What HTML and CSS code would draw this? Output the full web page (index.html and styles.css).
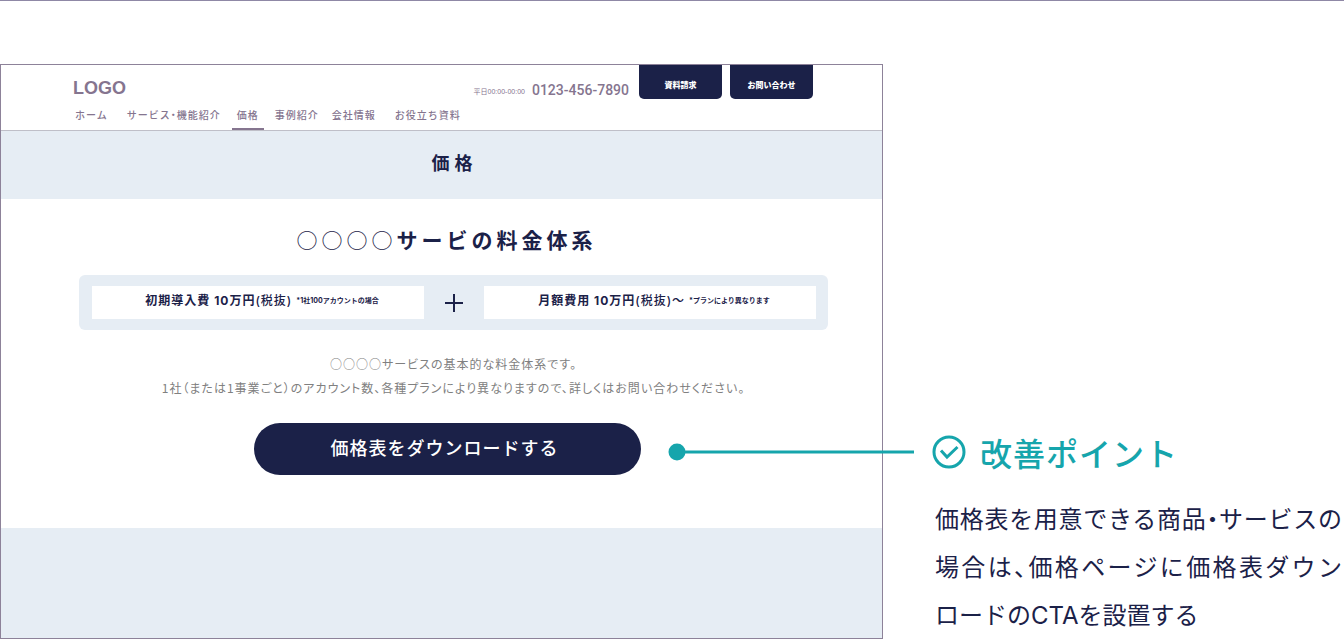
FILE: index.html
```html
<!DOCTYPE html>
<html lang="ja">
<head>
<meta charset="utf-8">
<meta name="viewport" content="width=device-width, initial-scale=1">
<title>価格</title>
<link rel="stylesheet" href="styles.css">
</head>
<body>
<div class="page">
  <section class="mock">
    <header class="header">
      <div class="header-top">
        <a class="logo" href="#">LOGO</a>
        <div class="contact">
          <span class="hours">平日00:00-00:00</span>
          <span class="tel">0123-456-7890</span>
          <button class="tab" type="button">資料請求</button>
          <button class="tab" type="button">お問い合わせ</button>
        </div>
      </div>
      <nav class="nav">
        <a class="nav-link wide" href="#">ホーム</a>
        <a class="nav-link" href="#">サービス・機能紹介</a>
        <a class="nav-link active" href="#">価格</a>
        <a class="nav-link" href="#">事例紹介</a>
        <a class="nav-link wide" href="#">会社情報</a>
        <a class="nav-link" href="#">お役立ち資料</a>
      </nav>
    </header>
    <div class="hero"><h1 class="hero-title">価格</h1></div>
    <div class="main">
      <h2 class="heading"><span class="circles">○○○○</span>サービの料金体系</h2>
      <div class="plans">
        <div class="plan"><span>初期導入費 10万円<span class="light">(税抜)</span></span><small class="note">*1社100アカウントの場合</small></div>
        <svg class="plus" viewBox="0 0 20 20" aria-hidden="true"><path d="M10 1v18M1 10h18"/></svg>
        <div class="plan"><span>月額費用 10万円<span class="light">(税抜)〜</span></span><small class="note">*プランにより異なります</small></div>
      </div>
      <p class="desc">○○○○サービスの基本的な料金体系です。<br>1社（または1事業ごと）のアカウント数、各種プランにより異なりますので、詳しくはお問い合わせください。</p>
      <button class="cta" type="button">価格表をダウンロードする</button>
    </div>
    <div class="footer-band"></div>
  </section>
  <aside class="callout">
    <h2 class="callout-title">
      <svg class="connector" viewBox="0 0 246 18" aria-hidden="true"><circle cx="9" cy="9" r="8.5"/><path d="M9 9h237"/></svg>
      <svg class="check" viewBox="0 0 34 34" aria-hidden="true"><circle cx="17" cy="17" r="15"/><path d="M9 15.500l6 6.500L25.500 12"/></svg>
      改善ポイント
    </h2>
    <p class="callout-text">
      <span class="line full">価格表を用意できる商品・サービスの</span>
      <span class="line full">場合は、価格ページに価格表ダウン</span>
      <span class="line">ロードの<span class="latin">CTA</span>を設置する</span>
    </p>
  </aside>
</div>
</body>
</html>
```

FILE: styles.css
```css
* { box-sizing: border-box; }

body {
  margin: 0;
  background: #fff;
  color: #1b2148;
  font-family: "Noto Sans CJK JP", sans-serif;
}

h1, h2, p { margin: 0; }
a { color: inherit; text-decoration: none; }
button { border: 0; color: #fff; background: #1b2148; font-family: inherit; cursor: pointer; }

.page {
  display: grid;
  grid-template-columns: 883fr 461fr;
  min-height: 100vh;
  padding-top: 63px;
  border-top: 1px solid #8f88a6;
}

.mock {
  display: flex;
  flex-direction: column;
  border: 1px solid #8d8299;
}

.header {
  padding: 0 69px 0 72px;
  border-bottom: 1px solid #bfbfc8;
  color: #85758f;
}

.header-top { display: flex; justify-content: space-between; height: 42px; }

.logo {
  padding-top: 13px;
  font: bold 18px/20px "Liberation Sans", sans-serif;
}

.contact { display: flex; align-items: flex-start; }
.hours { padding-top: 20px; font: 7px/14px "Liberation Sans", "Noto Sans CJK JP", sans-serif; }
.tel { margin: 0 10px 0 7px; padding-top: 15px; font: 500 14px/20px Roboto, sans-serif; }
.tab {
  width: 83px;
  height: 34px;
  padding: 4px 0 0;
  border-radius: 0 0 5px 5px;
  font-size: 8px;
  font-weight: 900;
}
.tab + .tab { margin-left: 8px; }

.nav { display: flex; gap: 9px; }
.nav-link {
  padding: 0 2px 7px;
  font-size: 10px;
  line-height: 16px;
  letter-spacing: 1px;
  font-weight: 500;
  white-space: nowrap;
  font-feature-settings: "halt";
}
.nav-link.wide { margin-right: 6px; }
.nav-link.active { padding: 0 5px; border-bottom: 2px solid #85758f; }

.hero { padding: 18px 52px 24px 78px; background: #e6edf4; text-align: center; }
.hero-title { font-size: 18px; line-height: 26px; letter-spacing: 5px; }

.main {
  display: flex;
  flex-direction: column;
  align-items: center;
  padding: 25px 54px 53px 78px;
}

.heading { margin-right: 14px; font-size: 21px; line-height: 30px; letter-spacing: 4px; }
.circles { font-weight: 400; }

.plans {
  display: grid;
  grid-template-columns: 1fr 20px 1fr;
  align-items: center;
  gap: 20px;
  width: 100%;
  margin-top: 21px;
  padding: 11px 12px 11px 13px;
  border-radius: 6px;
  background: #e6edf4;
}
.plan {
  display: flex;
  justify-content: center;
  align-items: center;
  gap: 4px;
  padding: 5px 0 8px 8px;
  background: #fff;
  font-family: Inter, "Noto Sans CJK JP", sans-serif;
  font-size: 12px;
  line-height: 20px;
  font-weight: bold;
  letter-spacing: 1px;
  white-space: nowrap;
}
.light { font-weight: 500; }
.note { font-size: 7px; letter-spacing: 0; }
.plus { width: 20px; height: 20px; fill: none; stroke: #1b2148; stroke-width: 2; }

.desc {
  margin-top: 22px;
  color: #808080;
  font-size: 12px;
  line-height: 24px;
  letter-spacing: 1px;
  text-align: center;
  white-space: nowrap;
  font-feature-settings: "palt";
}

.cta {
  width: 387px;
  height: 52px;
  margin: 23px 12px 0 0;
  padding: 0 6px 4px 0;
  border-radius: 26px;
  font-size: 18px;
  font-weight: 500;
  letter-spacing: 1px;
}

.footer-band { flex: 1; background: #e6edf4; }

.callout { padding: 364px 2px 0 49px; }
.callout-title {
  position: relative;
  display: flex;
  align-items: center;
  gap: 14px;
  color: #16a5ac;
  font-size: 32px;
  line-height: 48px;
  font-weight: 500;
  letter-spacing: 1px;
  white-space: nowrap;
}
.connector {
  position: absolute;
  right: 100%;
  width: 246px;
  height: 18px;
  margin-right: 18px;
  fill: #16a5ac;
  stroke: #16a5ac;
  stroke-width: 3;
}
.connector circle { stroke: none; }
.check { width: 34px; height: 34px; fill: none; stroke: #16a5ac; stroke-width: 3; }

.callout-text {
  margin-top: 18px;
  padding-left: 3px;
  font-size: 24px;
  line-height: 48px;
  font-feature-settings: "halt";
}
.latin { font-family: Inter, sans-serif; line-height: 1; }
.line { display: block; white-space: nowrap; }
.full { text-align: justify; text-align-last: justify; }
```
